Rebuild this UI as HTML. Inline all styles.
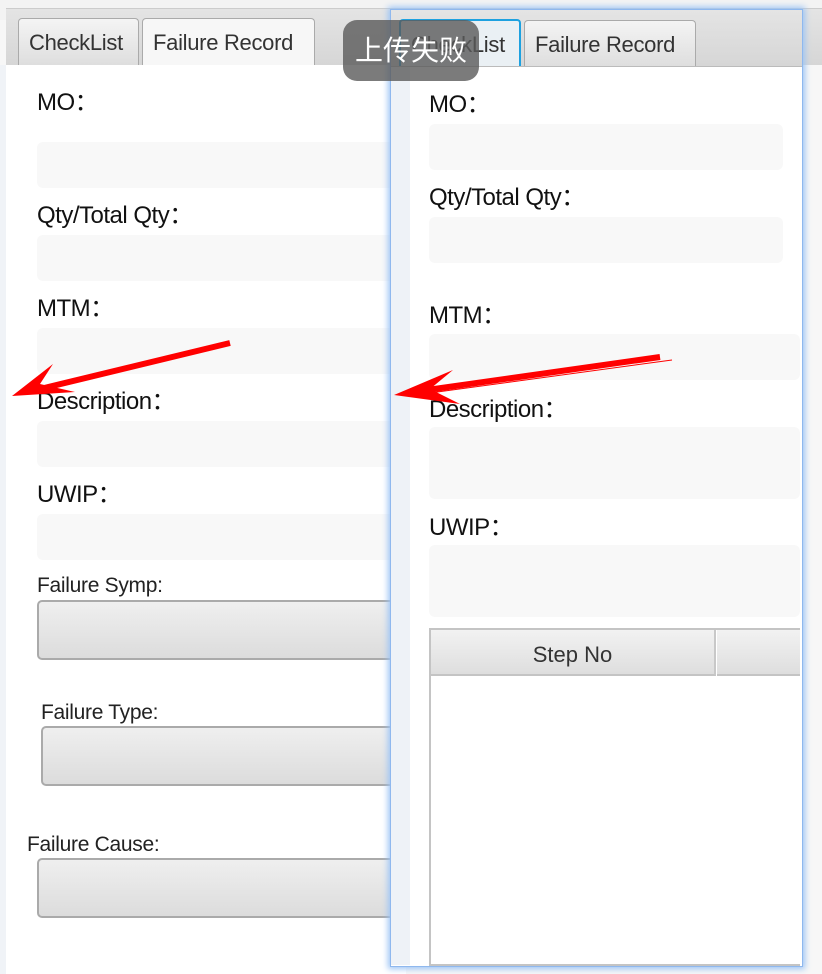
<!DOCTYPE html>
<html><head><meta charset="utf-8"><style>
*{margin:0;padding:0;box-sizing:border-box}
body{width:822px;height:974px;overflow:hidden;background:#f7f7f7;font-family:"Liberation Sans","Noto Sans CJK SC",sans-serif;position:relative;color:#111}
.abs{position:absolute}
.tabbar{background:linear-gradient(#e4e4e4,#d6d6d6);}
.tab{position:absolute;border:1px solid #aaa;border-bottom:none;border-radius:4px 4px 0 0;background:linear-gradient(#f4f4f4,#dedede);font-size:22px;color:#333;padding:0 10px;line-height:44px;letter-spacing:-0.3px}
.lbl{position:absolute;font-size:24px;color:#111;letter-spacing:-0.5px}
.in{position:absolute;background:#f8f8f8;border-radius:6px}
.btn{position:absolute;border:2px solid #aaa;border-radius:5px;background:linear-gradient(#efefef,#dcdcdc)}
.small{position:absolute;font-size:21px;color:#222;letter-spacing:-0.3px}
</style></head><body>
<div class="abs" style="left:0;top:0;width:822px;height:20px;background:#f3f3f3"></div>
<div class="abs tabbar" style="left:6px;top:8px;width:816px;height:57px;border-top:1px solid #ccc"></div>
<div class="tab" style="left:18px;top:18px;width:121px;height:47px;padding-top:2px">CheckList</div>
<div class="tab" style="left:142px;top:18px;width:173px;height:48px;background:#f7f7f7;padding-top:2px">Failure Record</div>
<div class="abs" style="left:6px;top:65px;width:400px;height:909px;background:#fff"></div>
<div class="abs" style="left:0;top:65px;width:6px;height:909px;background:#f0f3f7"></div>
<div class="lbl" style="left:37px;top:82px">MO：</div>
<div class="in" style="left:37px;top:142px;width:360px;height:46px"></div>
<div class="lbl" style="left:37px;top:195px">Qty/Total Qty：</div>
<div class="in" style="left:37px;top:235px;width:360px;height:46px"></div>
<div class="lbl" style="left:37px;top:288px">MTM：</div>
<div class="in" style="left:37px;top:328px;width:360px;height:46px"></div>
<div class="lbl" style="left:37px;top:381px">Description：</div>
<div class="in" style="left:37px;top:421px;width:360px;height:46px"></div>
<div class="lbl" style="left:37px;top:474px">UWIP：</div>
<div class="in" style="left:37px;top:514px;width:360px;height:46px"></div>
<div class="small" style="left:37px;top:574px">Failure Symp:</div>
<div class="btn" style="left:37px;top:600px;width:380px;height:60px"></div>
<div class="small" style="left:41px;top:701px">Failure Type:</div>
<div class="btn" style="left:41px;top:726px;width:380px;height:60px"></div>
<div class="small" style="left:27px;top:833px">Failure Cause:</div>
<div class="btn" style="left:37px;top:858px;width:380px;height:60px"></div>

<div class="abs" style="left:390px;top:9px;width:413px;height:958px;box-shadow:0 0 6px 2px #9cc4f5;background:#fff;border:1px solid #8fb8ee"></div>
<div class="abs tabbar" style="left:391px;top:10px;width:411px;height:56px"></div>
<div class="tab" style="left:399px;top:19px;width:122px;height:48px;border:2px solid #1da1e0;border-bottom:none;background:#eaf0f4;padding-top:2px">CheckList</div>
<div class="tab" style="left:524px;top:20px;width:172px;height:46px;padding-top:2px">Failure Record</div>
<div class="abs" style="left:391px;top:66px;width:411px;height:1px;background:#bbb"></div>
<div class="abs" style="left:391px;top:67px;width:19px;height:898px;background:#eef2f7"></div>
<div class="abs" style="left:410px;top:67px;width:390px;height:898px;background:#fff"></div>
<div class="lbl" style="left:429px;top:84px">MO：</div>
<div class="in" style="left:429px;top:124px;width:354px;height:46px"></div>
<div class="lbl" style="left:429px;top:177px">Qty/Total Qty：</div>
<div class="in" style="left:429px;top:217px;width:354px;height:46px"></div>
<div class="lbl" style="left:429px;top:295px">MTM：</div>
<div class="in" style="left:429px;top:334px;width:371px;height:46px"></div>
<div class="lbl" style="left:429px;top:389px">Description：</div>
<div class="in" style="left:429px;top:427px;width:371px;height:72px"></div>
<div class="lbl" style="left:429px;top:507px">UWIP：</div>
<div class="in" style="left:429px;top:545px;width:371px;height:72px"></div>
<div class="abs" style="left:429px;top:628px;width:371px;height:338px;border:2px solid #c4c4c4;border-right:none;background:#fff"></div>
<div class="abs" style="left:431px;top:630px;width:285px;height:46px;background:linear-gradient(#f2f2f2,#dedede);border-right:2px solid #c8c8c8;border-bottom:2px solid #c4c4c4;font-size:22px;color:#333;text-align:center;line-height:50px">Step No</div>
<div class="abs" style="left:717px;top:630px;width:83px;height:46px;background:linear-gradient(#f2f2f2,#dedede);border-bottom:2px solid #c4c4c4"></div>

<div class="abs" style="left:343px;top:20px;width:136px;height:61px;background:rgba(90,90,90,0.8);border-radius:14px;color:#fff;font-size:28px;line-height:61px;text-align:center">上传失败</div>

<svg class="abs" style="left:0;top:0" width="822" height="974">
<line x1="230" y1="343" x2="40" y2="389" stroke="#f00" stroke-width="6"/>
<polygon points="12,396 53,364 40,384 75,392" fill="#f00"/>
<line x1="660" y1="357" x2="420" y2="391" stroke="#f00" stroke-width="6"/>
<line x1="672" y1="360" x2="430" y2="393" stroke="#f00" stroke-width="1"/>
<polygon points="394,395 453,370 430,389 460,404" fill="#f00"/>
</svg>
</body></html>
